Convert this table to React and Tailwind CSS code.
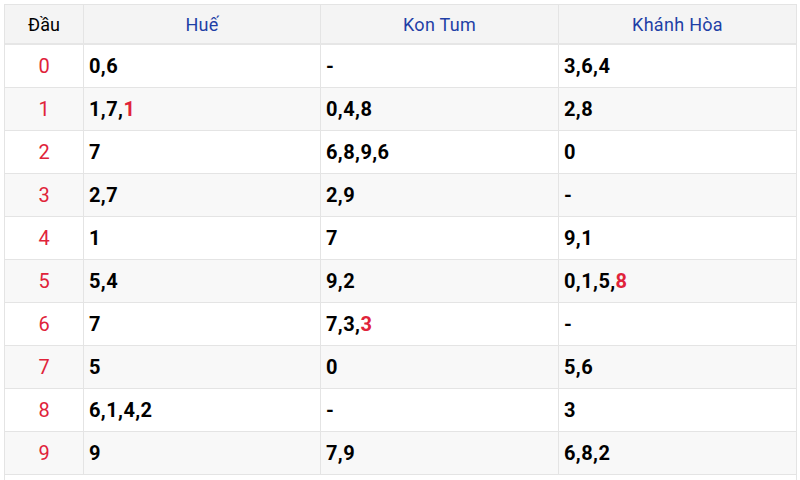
import React from "react";

const rows = [
  ["0", [["0,6"]], [["-"]], [["3,6,4"]]],
  ["1", [["1,7,"], ["1", true]], [["0,4,8"]], [["2,8"]]],
  ["2", [["7"]], [["6,8,9,6"]], [["0"]]],
  ["3", [["2,7"]], [["2,9"]], [["-"]]],
  ["4", [["1"]], [["7"]], [["9,1"]]],
  ["5", [["5,4"]], [["9,2"]], [["0,1,5,"], ["8", true]]],
  ["6", [["7"]], [["7,3,"], ["3", true]], [["-"]]],
  ["7", [["5"]], [["0"]], [["5,6"]]],
  ["8", [["6,1,4,2"]], [["-"]], [["3"]]],
  ["9", [["9"]], [["7,9"]], [["6,8,2"]]],
];

function Cell({ parts, last }) {
  return (
    <div
      className={
        "flex items-center pl-[5px] text-[20px] font-bold tracking-[0.4px] text-black " +
        (last ? "" : "border-r border-[#e4e4e4]")
      }
    >
      {parts.map(([t, red], i) => (
        <span key={i} className={red ? "text-[#e0233a]" : ""}>
          {t}
        </span>
      ))}
    </div>
  );
}

export default function App() {
  return (
    <div
      className="w-[800px] h-[480px] bg-white pt-[4px] pl-[4px] pr-[3px] overflow-hidden"
      style={{ fontFamily: "Roboto, 'Liberation Sans', sans-serif" }}
    >
      <div className="border border-[#e4e4e4] border-b-0">
        <div className="grid grid-cols-[79px_237px_238px_1fr] h-[40px] bg-[#f4f4f4] border-b-2 border-[#e6e6e6]">
          <div className="flex items-center justify-center border-r border-[#e4e4e4] text-[18px] text-black">
            Đầu
          </div>
          <div className="flex items-center justify-center border-r border-[#e4e4e4] text-[18px] tracking-[0.3px] text-[#1f3fa6]">
            Huế
          </div>
          <div className="flex items-center justify-center border-r border-[#e4e4e4] text-[18px] tracking-[0.3px] text-[#1f3fa6]">
            Kon Tum
          </div>
          <div className="flex items-center justify-center text-[18px] tracking-[0.3px] text-[#1f3fa6]">
            Khánh Hòa
          </div>
        </div>
        {rows.map(([d, a, b, c], i) => (
          <div
            key={d}
            className={
              "grid grid-cols-[79px_237px_238px_1fr] h-[43px] border-b border-[#e4e4e4] " +
              (i % 2 === 1 ? "bg-[#f8f8f8]" : "bg-white")
            }
          >
            <div className="flex items-center justify-center border-r border-[#e4e4e4] text-[20px] text-[#e0233a]">
              {d}
            </div>
            <Cell parts={a} />
            <Cell parts={b} />
            <Cell parts={c} last />
          </div>
        ))}
        <div className="h-[10px] bg-white" />
      </div>
    </div>
  );
}
